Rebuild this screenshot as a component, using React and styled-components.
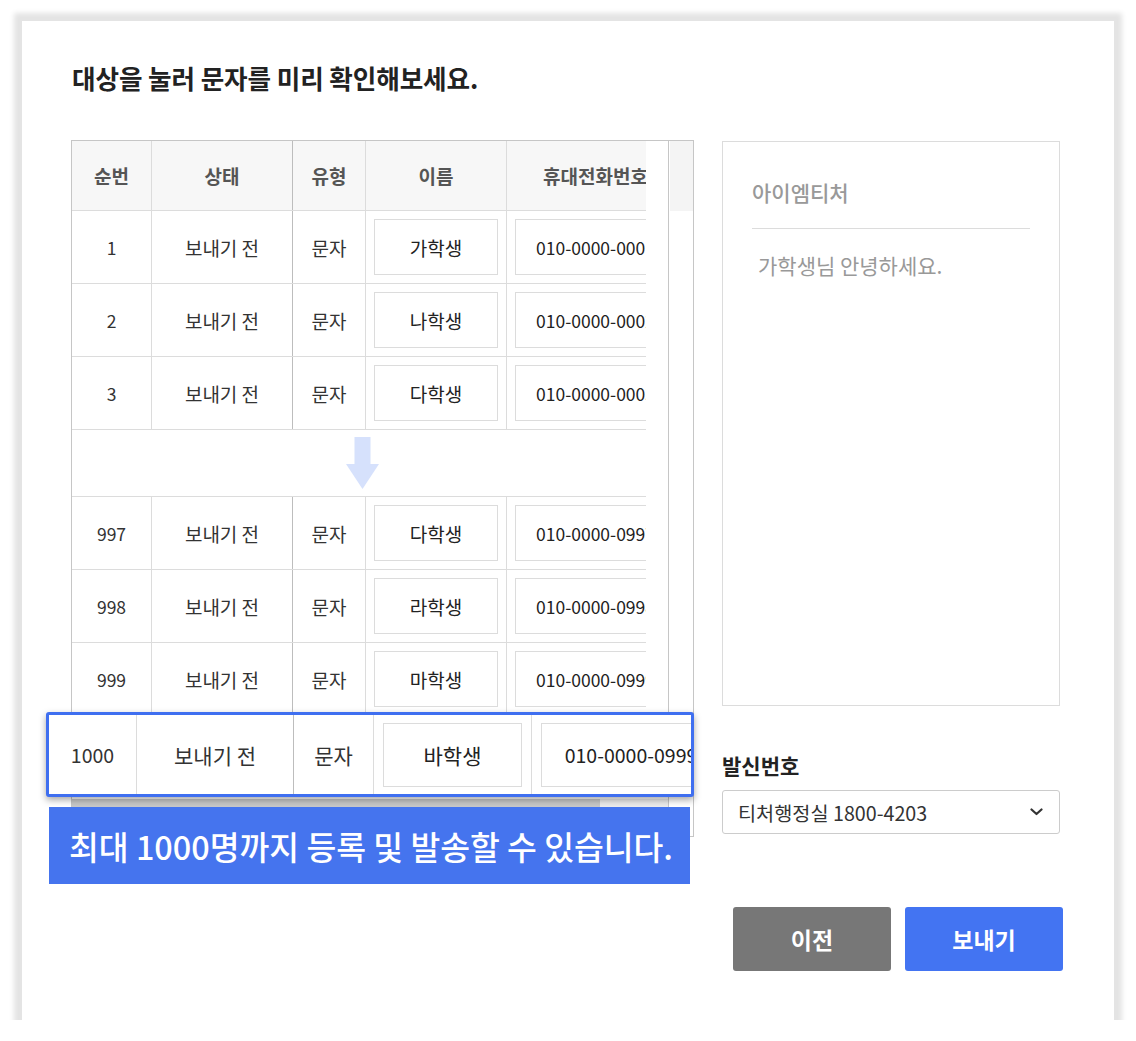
import React from "react";
import styled, { createGlobalStyle } from "styled-components";

const FONT = `"Noto Sans CJK KR", "Noto Sans", "Liberation Sans", sans-serif`;

const Global = createGlobalStyle`
  html, body { margin: 0; padding: 0; background: #ffffff; }
  body { font-family: ${FONT}; color: #333; }
  * { box-sizing: border-box; }
`;

const Card = styled.div`
  margin: 21px 0 0 22px;
  width: 1092px;
  height: 999px;
  background: #fff;
  box-shadow: 0 0 5px 8px #e4e4e4;
  padding: 40px 51px 0 49px;
  display: flex;
  flex-direction: column;
`;

const Title = styled.h1`
  margin: 0 0 0 1px;
  font-size: 25.6px;
  line-height: 34px;
  font-weight: 700;
  color: #222;
  letter-spacing: -0.1px;
`;

const Body = styled.div`
  margin-top: 45px;
  display: flex;
  gap: 28px;
  align-items: flex-start;
`;

const TableArea = styled.div`
  position: relative;
  width: 623px;
  flex: none;
`;

const Frame = styled.div`
  height: 697px;
  border: 1px solid #c6c6c6;
  display: flex;
`;

const LeftPane = styled.div`
  width: 596px;
  display: flex;
  flex-direction: column;
`;

const Viewport = styled.div`
  width: 574px;
  overflow: hidden;
`;

const VTrack = styled.div`
  width: 25px;
  border-left: 1px solid #c6c6c6;
  display: flex;
  flex-direction: column;
`;

const TrackHead = styled.div`
  height: 70px;
  margin-left: 1px;
  background: #f4f4f4;
`;

const HScroll = styled.div`
  margin-top: 10px;
  height: 9px;
  display: flex;
`;

const HThumb = styled.div`
  width: 528px;
  background: #c8c8c8;
`;

const HTrack = styled.div`
  flex: 1;
  background: #ececec;
`;

const GridRow = styled.div`
  display: grid;
  grid-template-columns: 80px 141px 73px 141px 178px;
  width: 613px;
  height: ${(p) => (p.$head ? 70 : 73)}px;
  border-bottom: 1px solid #dcdcdc;
  background: ${(p) => (p.$head ? "#f7f7f7" : "#fff")};
`;

const Cell = styled.div`
  display: flex;
  align-items: center;
  justify-content: center;
  border-right: 1px solid ${(p) => (p.$dark ? "#bdbdbd" : "#dcdcdc")};
  font-size: ${(p) => (p.$num ? "17.5px" : "19px")};
  font-weight: ${(p) => (p.$head ? 700 : 400)};
  color: ${(p) => (p.$head ? "#555" : "#333")};
  white-space: nowrap;
  overflow: hidden;
`;

const InputBox = styled.div`
  width: calc(100% - 16px);
  height: 56px;
  border: 1px solid #dcdcdc;
  display: flex;
  align-items: center;
  justify-content: center;
  font-size: ${(p) => (p.$num ? "17.5px" : "19px")};
  color: #222;
  white-space: nowrap;
  background: #fff;
`;

const GapRow = styled.div`
  height: 67px;
  border-bottom: 1px solid #dcdcdc;
  padding: 7px 0 0 274px;
  width: 613px;
`;

const HighlightRow = styled.div`
  position: absolute;
  left: -25px;
  top: 572px;
  width: 648px;
  height: 85px;
  border: 3px solid #3f6ff0;
  border-radius: 3px;
  background: #fff;
  box-shadow: 0 3px 7px rgba(0, 0, 0, 0.35);
  overflow: hidden;
  display: grid;
  grid-template-columns: 88px 157px 80px 158px 199px;
`;

const BigCell = styled(Cell)`
  font-size: ${(p) => (p.$num ? "19.5px" : "21px")};
`;

const BigBox = styled(InputBox)`
  width: calc(100% - 18px);
  height: 64px;
  font-size: ${(p) => (p.$num ? "19.5px" : "21px")};
`;

const Banner = styled.div`
  position: absolute;
  left: -22px;
  top: 667px;
  width: 641px;
  height: 77px;
  background: #4574ee;
  color: #fff;
  font-size: 32.4px;
  font-weight: 500;
  display: flex;
  align-items: center;
  padding-left: 20px;
  white-space: nowrap;
`;

const RightCol = styled.div`
  width: 338px;
  margin-top: 1px;
  display: flex;
  flex-direction: column;
`;

const Preview = styled.div`
  height: 565px;
  border: 1px solid #dcdcdc;
  padding: 36px 29px 0 29px;
`;

const Sender = styled.div`
  font-size: 21px;
  line-height: 28px;
  font-weight: 500;
  color: #999;
  padding-bottom: 22px;
  border-bottom: 1px solid #dcdcdc;
`;

const Message = styled.div`
  margin-top: 21px;
  padding-left: 6px;
  font-size: 21px;
  line-height: 30px;
  color: #999;
`;

const Label = styled.div`
  margin-top: 45px;
  font-size: 21px;
  line-height: 28px;
  font-weight: 700;
  color: #222;
`;

const Select = styled.div`
  margin-top: 11px;
  height: 44px;
  border: 1px solid #cccccc;
  border-radius: 3px;
  display: flex;
  align-items: center;
  justify-content: space-between;
  padding: 0 16px 0 15px;
  font-size: 19.7px;
  color: #333;
`;

const Footer = styled.div`
  margin-top: 70px;
  display: flex;
  justify-content: flex-end;
  gap: 14px;
`;

const Button = styled.button`
  width: 158px;
  height: 64px;
  border: none;
  border-radius: 3px;
  background: ${(p) => (p.$primary ? "#4374f2" : "#777777")};
  color: #fff;
  font-family: ${FONT};
  font-size: 23px;
  font-weight: 700;
  cursor: pointer;
`;

const ArrowIcon = () => (
  <svg width="33" height="52" viewBox="0 0 33 52">
    <rect x="8.5" y="0" width="16" height="28" fill="#d6e1fc" />
    <polygon points="0,27 33,27 16.5,52" fill="#d6e1fc" />
  </svg>
);

const Chevron = () => (
  <svg width="13" height="8" viewBox="0 0 13 8">
    <polyline
      points="1.5,1.5 6.5,6 11.5,1.5"
      fill="none"
      stroke="#333"
      strokeWidth="2.2"
      strokeLinecap="round"
      strokeLinejoin="round"
    />
  </svg>
);

const topRows = [
  { n: "1", name: "가학생", phone: "010-0000-0001" },
  { n: "2", name: "나학생", phone: "010-0000-0002" },
  { n: "3", name: "다학생", phone: "010-0000-0003" },
];
const bottomRows = [
  { n: "997", name: "다학생", phone: "010-0000-0997" },
  { n: "998", name: "라학생", phone: "010-0000-0998" },
  { n: "999", name: "마학생", phone: "010-0000-0999" },
];

const DataRow = ({ r }) => (
  <GridRow>
    <Cell $num>{r.n}</Cell>
    <Cell $dark>보내기 전</Cell>
    <Cell>문자</Cell>
    <Cell>
      <InputBox>{r.name}</InputBox>
    </Cell>
    <Cell>
      <InputBox $num>{r.phone}</InputBox>
    </Cell>
  </GridRow>
);

const BlankRow = () => (
  <GridRow>
    <Cell />
    <Cell $dark />
    <Cell />
    <Cell>
      <InputBox />
    </Cell>
    <Cell>
      <InputBox />
    </Cell>
  </GridRow>
);

export default function App() {
  return (
    <>
      <Global />
      <Card>
        <Title>대상을 눌러 문자를 미리 확인해보세요.</Title>
        <Body>
          <TableArea>
            <Frame>
              <LeftPane>
                <Viewport>
                  <GridRow $head>
                    <Cell $head>순번</Cell>
                    <Cell $head $dark>상태</Cell>
                    <Cell $head>유형</Cell>
                    <Cell $head>이름</Cell>
                    <Cell $head>휴대전화번호</Cell>
                  </GridRow>
                  {topRows.map((r) => (
                    <DataRow key={r.n} r={r} />
                  ))}
                  <GapRow>
                    <ArrowIcon />
                  </GapRow>
                  {bottomRows.map((r) => (
                    <DataRow key={r.n} r={r} />
                  ))}
                  <BlankRow />
                </Viewport>
                <HScroll>
                  <HThumb />
                  <HTrack />
                </HScroll>
              </LeftPane>
              <VTrack>
                <TrackHead />
              </VTrack>
            </Frame>
            <HighlightRow>
              <BigCell $num>1000</BigCell>
              <BigCell $dark>보내기 전</BigCell>
              <BigCell>문자</BigCell>
              <BigCell>
                <BigBox>바학생</BigBox>
              </BigCell>
              <BigCell>
                <BigBox $num>010-0000-0999</BigBox>
              </BigCell>
            </HighlightRow>
            <Banner>최대 1000명까지 등록 및 발송할 수 있습니다.</Banner>
          </TableArea>
          <RightCol>
            <Preview>
              <Sender>아이엠티처</Sender>
              <Message>가학생님 안녕하세요.</Message>
            </Preview>
            <Label>발신번호</Label>
            <Select>
              <span>티처행정실 1800-4203</span>
              <Chevron />
            </Select>
          </RightCol>
        </Body>
        <Footer>
          <Button>이전</Button>
          <Button $primary>보내기</Button>
        </Footer>
      </Card>
    </>
  );
}
